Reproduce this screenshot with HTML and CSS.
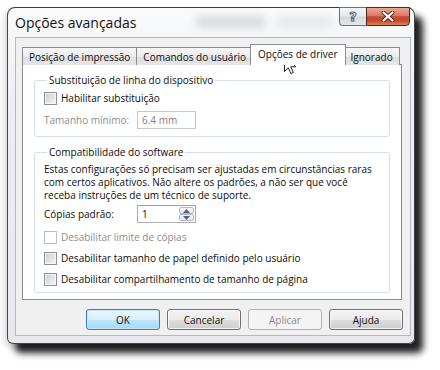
FILE: index.html
```html
<!DOCTYPE html>
<html lang="pt">
<head>
<meta charset="utf-8">
<title>Opções avançadas</title>
<link rel="stylesheet" href="styles.css">
</head>
<body>
<div class="stage">
  <div class="window">
    <div class="titlebar">
      <span class="title">Opções avançadas</span>
      <span class="glass-blur gb1"></span>
      <span class="glass-blur gb2"></span>
      <div class="caption">
        <div class="cap help"><span class="qmark">?</span></div>
        <div class="cap close">
          <svg width="14" height="11" viewBox="0 0 14 11"><path d="M2.5 1.5 L11.5 9.5 M11.5 1.5 L2.5 9.5" stroke="#5a2a1e" stroke-width="4" stroke-linecap="round"/><path d="M2.5 1.5 L11.5 9.5 M11.5 1.5 L2.5 9.5" stroke="#fff" stroke-width="2.2" stroke-linecap="round"/></svg>
        </div>
      </div>
    </div>
    <div class="client">
      <div class="tabs">
        <div class="tab">Posição de impressão</div>
        <div class="tab">Comandos do usuário</div>
        <div class="tab active">Opções de driver</div>
        <div class="tab">Ignorado</div>
      </div>
      <div class="panel">
        <fieldset class="group g1">
          <legend>Substituição de linha do dispositivo</legend>
          <div class="check"><span class="box"></span>Habilitar substituição</div>
          <div class="field-row disabled">
            <span class="flabel">Tamanho mínimo:</span>
            <span class="input">6.4 mm</span>
          </div>
        </fieldset>
        <fieldset class="group g2">
          <legend>Compatibilidade do software</legend>
          <p class="para">Estas configurações só precisam ser ajustadas em circunstâncias raras<br>com certos aplicativos. Não altere os padrões, a não ser que você<br>receba instruções de um técnico de suporte.</p>
          <div class="field-row">
            <span class="flabel">Cópias padrão:</span>
            <span class="input spin">1
              <span class="spinbtns">
                <span class="sb up"><svg width="7" height="4" viewBox="0 0 7 4"><path d="M0 4 L3.5 0 L7 4 Z" fill="#4d6185"/></svg></span>
                <span class="sb down"><svg width="7" height="4" viewBox="0 0 7 4"><path d="M0 0 L3.5 4 L7 0 Z" fill="#4d6185"/></svg></span>
              </span>
            </span>
          </div>
          <div class="check disabled first"><span class="box"></span>Desabilitar limite de cópias</div>
          <div class="check"><span class="box"></span>Desabilitar tamanho de papel definido pelo usuário</div>
          <div class="check"><span class="box"></span>Desabilitar compartilhamento de tamanho de página</div>
        </fieldset>
      </div>
      <div class="buttons">
        <div class="btn default">OK</div>
        <div class="btn">Cancelar</div>
        <div class="btn disabled">Aplicar</div>
        <div class="btn">Ajuda</div>
      </div>
    </div>
  </div>
  <svg class="cursor" width="13" height="20" viewBox="0 0 13 20"><path d="M0.5 0.5 L0.5 16.5 L4.3 12.8 L6.8 18.6 L9.3 17.5 L6.8 11.8 L11.8 11.8 Z" fill="#fff" stroke="#222" stroke-width="1" stroke-linejoin="round"/></svg>
</div>
</body>
</html>
```
FILE: styles.css
```css
* { box-sizing: border-box; }
html, body { margin: 0; padding: 0; }
body {
  width: 440px;
  height: 370px;
  overflow: hidden;
  background: #fff;
  font-family: "Open Sans", "Liberation Sans", sans-serif;
  font-size: 10px;
  color: #0c0c0c;
}
.stage {
  position: relative;
  padding: 7px 0 0 7px;
  height: 370px;
}
.window {
  position: relative;
  width: 408px;
  height: 337px;
  border: 1px solid #444;
  border-top-color: #3a3a3a;
  border-radius: 8px 8px 6px 6px;
  background: linear-gradient(180deg, #f9fafb 0%, #eceef1 30%, #e6e8eb 100%);
  box-shadow: 8px 9px 7px rgba(0,0,0,0.88), -3px 3px 6px rgba(0,0,0,0.15);
  display: flex;
  flex-direction: column;
  padding: 0 3px 7px 7px;
}
.titlebar {
  position: relative;
  height: 29px;
  flex: none;
  display: flex;
  align-items: center;
  padding-bottom: 1px;
}
.title {
  font-size: 14px;
  color: #111;
  position: relative;
  z-index: 1;
}
.glass-blur {
  position: absolute;
  top: 8px;
  height: 12px;
  background: #bdbdbd;
  filter: blur(4px);
  opacity: 0.5;
}
.gb1 { left: 182px; width: 68px; }
.gb2 { left: 262px; width: 55px; opacity: 0.28; }
.caption {
  position: absolute;
  top: -1px;
  right: 1px;
  display: flex;
}
.cap {
  height: 19px;
  display: flex;
  align-items: center;
  justify-content: center;
}
.help {
  width: 27px;
  border: 1px solid #6c7079;
  border-right: none;
  border-radius: 0 0 0 4px;
  background: linear-gradient(180deg, #f4f5f7 0%, #e5e8ec 48%, #d3d7dd 52%, #e4e7eb 100%);
}
.qmark {
  font-family: "DejaVu Sans", sans-serif;
  font-weight: bold;
  font-size: 13px;
  line-height: 1;
  color: #f6f6f6;
  -webkit-text-stroke: 1px #5d6068;
}
.close {
  width: 44px;
  border: 1px solid #4b2a22;
  border-radius: 0 0 4px 0;
  background: linear-gradient(180deg, #e9a996 0%, #d87a64 45%, #c24a30 52%, #c24d33 75%, #dc8350 100%);
}
.client {
  flex: 1;
  border: 1px solid #b4b9bf;
  background: #f0f0f0;
  padding: 6px 8px 4px 6px;
  display: flex;
  flex-direction: column;
}
.tabs {
  display: flex;
  height: 20px;
  flex: none;
  align-items: flex-end;
  position: relative;
  z-index: 1;
}
.tab {
  height: 18px;
  margin-bottom: -1px;
  padding: 0 6px;
  border: 1px solid #898c95;
  border-bottom: none;
  margin-right: -1px;
  background: linear-gradient(180deg, #f7f7f7 0%, #ebebeb 50%, #dddddd 51%, #e6e6e6 100%);
  display: flex;
  align-items: center;
  white-space: nowrap;
}
.tab.active {
  height: 21px;
  background: #fff;
  margin-left: -2px;
  margin-right: -2px;
  padding: 0 7px 3px;
  position: relative;
  z-index: 2;
}
.panel {
  border: 1px solid #898c95;
  background: #fff;
  padding: 8px 11px 6px 11px;
  height: 236px;
  flex: none;
}
.group {
  margin: 0;
  border: 1px solid #d5dfe5;
  border-radius: 3px;
  padding: 0 9px 7px 9px;
  min-width: 0;
}
.group legend {
  padding: 0 2px;
  margin-left: 3px;
  line-height: 14px;
}
.g2 { margin-top: 8px; padding-bottom: 5px; }
.check {
  display: flex;
  align-items: center;
  height: 16px;
  margin-top: 3px;
  white-space: nowrap;
}
.g2 .check { margin-top: 5px; }
.g2 .check.first { margin-top: 6px; }
.box {
  width: 13px;
  height: 13px;
  border: 1px solid #8e8f8f;
  background: linear-gradient(135deg, #c9ccd1 0%, #e3e4e6 55%, #f7f7f7 100%);
  box-shadow: inset 0 0 0 1px #f4f4f4;
  margin-right: 4px;
  flex: none;
}
.check.disabled { color: #8d8d8d; }
.check.disabled .box {
  border-color: #bcbcbc;
  background: #fff;
  box-shadow: none;
}
.field-row {
  display: flex;
  align-items: center;
  margin-top: 5px;
  white-space: nowrap;
}
.flabel {
  width: 93px;
  flex: none;
}
.field-row.disabled .flabel { color: #8d8d8d; }
.input {
  position: relative;
  width: 59px;
  height: 18px;
  border: 1px solid #abadb3;
  border-top-color: #9ea0a6;
  background: #fff;
  padding-left: 4px;
  display: flex;
  align-items: center;
}
.field-row.disabled .input {
  border-color: #c6c7c9;
  color: #808080;
}
.para {
  margin: 4px 0 0;
  line-height: 13px;
  white-space: nowrap;
}
.g2 .field-row { margin-top: 3px; }
.spinbtns {
  position: absolute;
  right: 1px;
  top: 1px;
  bottom: 1px;
  width: 15px;
  display: flex;
  flex-direction: column;
}
.sb {
  flex: 1;
  border: 1px solid #b5b9c1;
  border-radius: 2px;
  background: linear-gradient(180deg, #f6f7f9, #e3e6ea);
  display: flex;
  align-items: center;
  justify-content: center;
}
.buttons {
  display: flex;
  justify-content: flex-end;
  gap: 7px;
  margin-top: 9px;
  margin-right: -1px;
}
.btn {
  width: 74px;
  height: 21px;
  border: 1px solid #707070;
  border-radius: 3px;
  background: linear-gradient(180deg, #f3f3f3 0%, #ebebeb 50%, #dddddd 51%, #cfcfcf 100%);
  box-shadow: inset 0 0 0 1px rgba(255,255,255,0.7);
  display: flex;
  align-items: center;
  justify-content: center;
  color: #111;
}
.btn.default {
  border-color: #3c7fb1;
  background: linear-gradient(180deg, #eaf6fd 0%, #d9f0fc 50%, #bee6fd 51%, #a7d9f5 100%);
  box-shadow: inset 0 0 0 1px #c5e6f8;
}
.btn.disabled {
  border-color: #adb2b5;
  background: #f4f4f4;
  box-shadow: none;
  color: #8a8a8a;
}
.cursor {
  position: absolute;
  left: 284px;
  top: 55px;
}
```
